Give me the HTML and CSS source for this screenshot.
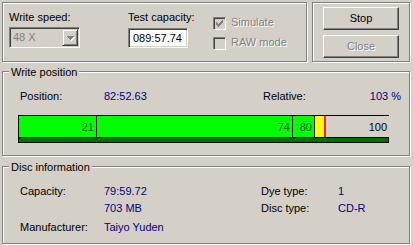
FILE: index.html
```html
<!DOCTYPE html>
<html>
<head>
<meta charset="utf-8">
<link rel="stylesheet" href="styles.css">
</head>
<body>
<div class="window">
  <div class="top">
    <div class="etched settings">
      <div class="field speed">
        <div class="label">Write speed:</div>
        <div class="combo">
          <span class="combo-text">48 X</span>
          <span class="combo-btn">
            <svg width="7" height="4" viewBox="0 0 7 4"><path d="M0 0h7v1H0zM1 1h5v1H1zM2 2h3v1H2zM3 3h1v1H3z" fill="#808080"/></svg>
          </span>
        </div>
      </div>
      <div class="field capacity">
        <div class="label">Test capacity:</div>
        <div class="edit">089:57.74</div>
      </div>
      <div class="checks">
        <div class="check disabled">
          <span class="box">
            <svg width="7" height="7" viewBox="0 0 7 7"><path d="M0 2h1v3H0zM1 3h1v3H1zM2 4h1v3H2zM3 3h1v3H3zM4 2h1v3H4zM5 1h1v3H5zM6 0h1v3H6z" fill="#808080"/></svg>
          </span>
          <span class="check-text">Simulate</span>
        </div>
        <div class="check disabled">
          <span class="box"></span>
          <span class="check-text">RAW mode</span>
        </div>
      </div>
    </div>
    <div class="etched actions">
      <button class="btn">Stop</button>
      <button class="btn disabled">Close</button>
    </div>
  </div>

  <div class="etched group write-pos">
    <div class="group-title">Write position</div>
    <div class="pos-row">
      <span class="lbl">Position:</span>
      <span class="val">82:52.63</span>
      <span class="lbl">Relative:</span>
      <span class="val right">103 %</span>
    </div>
    <div class="bar">
      <div class="segments">
        <div class="seg green" style="width:78px">21</div>
        <div class="seg green" style="width:196px">74</div>
        <div class="seg green" style="width:22px">80</div>
        <div class="seg yellow" style="width:9px"></div>
        <div class="seg marker" style="width:1px"></div>
        <div class="seg rest" style="width:63px">100</div>
      </div>
      <div class="strip"></div>
    </div>
  </div>

  <div class="etched group disc-info">
    <div class="group-title">Disc information</div>
    <div class="disc-grid">
      <span class="lbl">Capacity:</span>
      <span class="val">79:59.72</span>
      <span class="lbl">Dye type:</span>
      <span class="val">1</span>
      <span></span>
      <span class="val">703 MB</span>
      <span class="lbl">Disc type:</span>
      <span class="val">CD-R</span>
      <span class="lbl">Manufacturer:</span>
      <span class="val">Taiyo Yuden</span>
      <span></span>
      <span></span>
    </div>
  </div>
</div>
</body>
</html>
```

FILE: styles.css
```css
* { box-sizing: border-box; }

body {
  margin: 0;
  background: #d4d0c8;
  font: 11px/13px "Liberation Sans", Arial, sans-serif;
  color: #000;
}

.window {
  width: 413px;
  height: 246px;
  padding: 2px 3px 0 2px;
  overflow: hidden;
}

.etched {
  border: 1px solid #808080;
  box-shadow: inset 1px 1px 0 #fff, 1px 1px 0 #fff;
}

.top {
  display: flex;
  gap: 5px;
}

.settings {
  width: 305px;
  height: 60px;
  display: flex;
  padding: 8px 0 0 6px;
}

.label {
  height: 13px;
  white-space: nowrap;
}

.speed { width: 71px; }

.combo {
  margin-top: 3px;
  width: 71px;
  height: 21px;
  display: flex;
  align-items: stretch;
  border: 1px solid;
  border-color: #808080 #fff #fff #808080;
  box-shadow: inset 1px 1px 0 #404040, inset -1px -1px 0 #d4d0c8;
  padding: 1px;
  background: #d4d0c8;
}

.combo-text {
  flex: 1;
  color: #808080;
  padding-left: 2px;
  line-height: 17px;
}

.combo-btn {
  width: 16px;
  display: flex;
  align-items: center;
  justify-content: center;
  border: 1px solid;
  border-color: #d4d0c8 #404040 #404040 #d4d0c8;
  box-shadow: inset 1px 1px 0 #fff, inset -1px -1px 0 #808080;
}

.combo-btn svg { display: block; filter: drop-shadow(1px 1px 0 #fff); }

.capacity {
  margin-left: 48px;
  width: 60px;
}

.edit {
  margin-top: 4px;
  width: 60px;
  height: 20px;
  background: #fff;
  border: 1px solid;
  border-color: #808080 #fff #fff #808080;
  box-shadow: inset 1px 1px 0 #404040, inset -1px -1px 0 #d4d0c8;
  padding-left: 4px;
  line-height: 18px;
}

.checks {
  margin-left: 25px;
  padding-top: 6px;
  display: flex;
  flex-direction: column;
  gap: 7px;
}

.check {
  display: flex;
  align-items: flex-start;
  gap: 5px;
  height: 13px;
}

.box {
  width: 13px;
  height: 13px;
  border: 1px solid;
  border-color: #808080 #fff #fff #808080;
  box-shadow: inset 1px 1px 0 #404040, inset -1px -1px 0 #d4d0c8;
  background: #d4d0c8;
  display: flex;
  align-items: center;
  justify-content: center;
}

.box svg { display: block; }

.check-text {
  line-height: 13px;
  margin-top: -1px;
}

.disabled .check-text,
.btn.disabled {
  color: #808080;
  text-shadow: 1px 1px 0 #fff;
}

.actions {
  width: 98px;
  height: 60px;
  display: flex;
  flex-direction: column;
  gap: 5px;
  padding: 4px 0 0 10px;
}

.btn {
  width: 76px;
  height: 23px;
  padding: 0;
  font: inherit;
  color: #000;
  background: #d4d0c8;
  border: 1px solid;
  border-color: #fff #404040 #404040 #fff;
  box-shadow: inset -1px -1px 0 #808080;
}

.group {
  width: 408px;
}

.write-pos {
  margin-top: 9px;
  height: 85px;
}

.disc-info {
  margin-top: 10px;
  height: 78px;
}

.group-title {
  width: fit-content;
  margin: -6px 0 0 6px;
  padding: 0 2px;
  background: #d4d0c8;
  line-height: 13px;
}

.pos-row {
  margin-top: 11px;
  padding-left: 17px;
  display: grid;
  grid-template-columns: 84px 159px 43px 95px;
  height: 13px;
}

.val { color: #000080; white-space: nowrap; }
.lbl { white-space: nowrap; }
.right { text-align: right; }

.bar {
  margin: 12px 0 0 15px;
  width: 371px;
  height: 28px;
  border: 1px solid #000;
}

.segments {
  display: flex;
  height: 22px;
  border-bottom: 1px solid #000;
}

.seg {
  height: 21px;
  text-align: right;
  padding: 1px 2px 0 0;
  line-height: 20px;
  flex: none;
  overflow: hidden;
}

.green {
  background: #00ff00;
  color: #006000;
  border-right: 1px solid #000;
}

.yellow { background: #ffff00; }
.marker { background: #ff2000; }
.rest { background: #d4d0c8; color: #000; }

.strip {
  height: 4px;
  background: #007000;
}

.disc-grid {
  margin-top: 11px;
  padding-left: 17px;
  display: grid;
  grid-template-columns: 84px 157px 77px 1fr;
  grid-template-rows: 17px 19px 13px;
}
```
